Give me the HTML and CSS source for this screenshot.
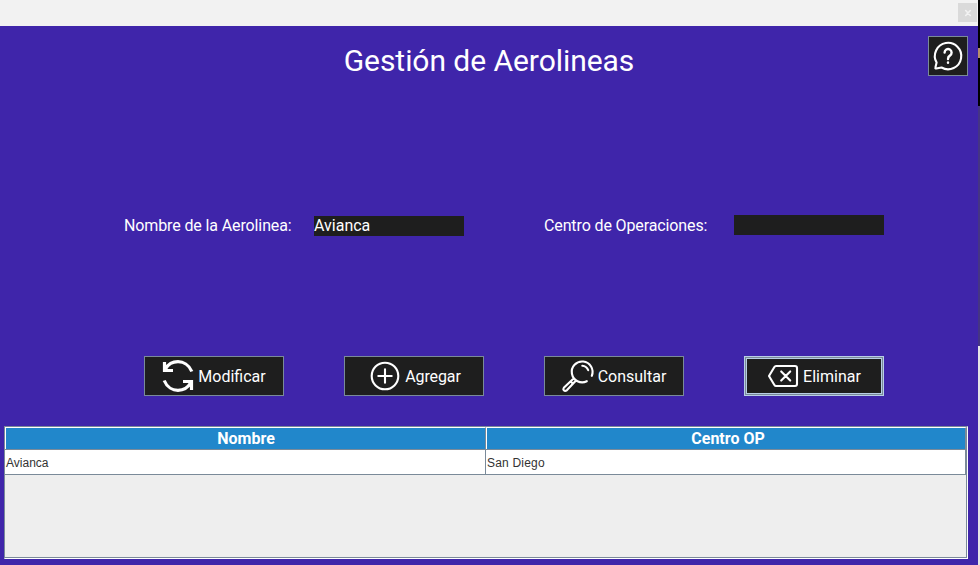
FILE: index.html
```html
<!DOCTYPE html>
<html lang="es">
<head>
<meta charset="utf-8">
<title>Gestión de Aerolineas</title>
<link rel="stylesheet" href="styles.css">
</head>
<body>
<div class="screen">
  <div class="window">
    <header class="titlebar"><button class="close" aria-label="Cerrar"><svg width="6" height="6" viewBox="0 0 6 6"><path d="M.7 .5l4.6 5M5.3 .5l-4.6 5"/></svg></button></header>
    <main class="panel">
      <div class="heading">
        <h1>Gestión de Aerolineas</h1>
        <button class="help" aria-label="Ayuda">
          <svg width="32" height="32" viewBox="0 0 32 32"><path d="M4.6 22.6A13.2 13.2 0 1 1 9.5 27.5L4.3 28.5Q3 28.6 3.4 27.5z"/><path class="question" d="M12.6 12.6a3.5 3.5 0 1 1 5.3 3Q16 16.7 16 19"/><path class="question" d="M16 22.4v.3"/></svg>
        </button>
      </div>
      <div class="fields">
        <label for="nombre">Nombre de la Aerolinea:</label>
        <input id="nombre" class="name-input" value="Avianca">
        <label for="centro">Centro de Operaciones:</label>
        <input id="centro">
      </div>
      <div class="actions">
        <button class="action"><svg width="32" height="32" viewBox="0 0 32 32"><path class="thick" d="M29.8 11.5C27 4.5 21 1.7 16 1.7 10 1.7 6 4.5 3.5 9M2.5 2V10.5h8.5M2.2 20.5C5 27.5 11 30.3 16 30.3c6 0 10-2.8 12.5-7.3M29.5 30v-8.5H21"/></svg><span>Modificar</span></button>
        <button class="action agregar"><svg width="32" height="32" viewBox="0 0 32 32"><circle cx="16" cy="16" r="13.3"/><path d="M16 9.3v13.4M9.3 16h13.4"/></svg><span>Agregar</span></button>
        <button class="action"><svg width="32" height="32" viewBox="0 0 32 32"><path d="M24.8 21.2A10.4 10.4 0 1 1 29.8 15.8M20.3 5.8q4.2.3 5.9 4.4M11.6 18.4L1.8 27.8q-1 1.3 0 2.5 1.3 1.2 3 0l9.2-9.8M8.7 21.5l2.3 2.3"/></svg><span>Consultar</span></button>
        <button class="action selected"><svg width="32" height="32" viewBox="0 0 32 32"><path d="M9 6h19a2 2 0 0 1 2 2v16a2 2 0 0 1-2 2H9q-1 0-1.6-1L2 16l5.4-9Q8 6 9 6zM14.2 11.4l9 9.2M23.2 11.4l-9 9.2"/></svg><span>Eliminar</span></button>
      </div>
      <div class="table-frame">
        <table>
          <thead><tr><th>Nombre</th><th>Centro OP</th></tr></thead>
          <tbody><tr><td>Avianca</td><td>San Diego</td></tr></tbody>
        </table>
      </div>
    </main>
  </div>
  <div class="desktop-edge"></div>
</div>
</body>
</html>
```
FILE: styles.css
```css
* { box-sizing: border-box; }
body { margin: 0; overflow: hidden; font-family: Roboto, sans-serif; font-size: 16px; color: #fff; }
button { margin: 0; padding: 0; font: inherit; color: inherit; border-radius: 0; }
.screen { display: flex; width: 980px; height: 565px; }
.window { width: 978px; background: #3f25aa; }
.titlebar { display: flex; justify-content: flex-end; height: 26px; padding: 3px 1px 0 0; background: #f2f2f2; }
.close { display: flex; align-items: center; justify-content: center; width: 19px; height: 19px; border: 0; background: #dadada; }
.close svg { stroke: #f2f2f2; stroke-width: 1.6; }
.panel { display: flex; flex-direction: column; height: 539px; padding: 10px 10px 6px 4px; }
.heading { display: grid; grid-template-columns: 924px 40px; height: 40px; }
h1 { margin: 0; padding-left: 46px; font-size: 30px; font-weight: 400; line-height: 50px; letter-spacing: -.05px; text-align: center; white-space: nowrap; }
.help { display: flex; align-items: center; justify-content: center; width: 40px; height: 40px; border: 1px solid #7a8a99; background: #1e1e1e; }
svg { flex: none; overflow: visible; fill: none; stroke: #fff; stroke-width: 2.1; stroke-linecap: round; stroke-linejoin: round; }
.thick { stroke-width: 3.2; stroke-linecap: butt; stroke-linejoin: miter; }
.question { stroke-width: 2.4; }
.fields { display: grid; grid-template-columns: 190px 150px 80px 190px 150px; margin: 139px 0 0 120px; height: 21px; line-height: 21px; }
.fields label { letter-spacing: -.12px; }
.fields label:nth-of-type(2) { grid-column: 4; }
.fields input { width: 150px; height: 20px; padding: 0; border: 0; border-radius: 0; background: #1e1e1e; color: #fff; font: 16px/20px Roboto, sans-serif; outline: 0; }
.fields .name-input { margin-top: 1px; }
.actions { display: flex; gap: 60px; margin: 120px 0 0 140px; }
.action { display: flex; align-items: center; justify-content: center; gap: 4px; width: 140px; height: 40px; border: 1px solid #7a8a99; background: #1e1e1e; }
.agregar { padding-left: 2px; letter-spacing: -.1px; }
.selected { border: 1px solid #b8cfe5; box-shadow: inset 0 0 0 1px #7a8a99, inset 0 0 0 2px #b8cfe5; }
.table-frame { width: 964px; height: 133px; margin-top: 30px; border: 1px solid; border-color: #7a8a99 #fff #fff #7a8a99; background: #eee; box-shadow: inset -1px -1px #7a8a99; }
table { width: 962px; table-layout: fixed; border-collapse: separate; border-spacing: 0; }
th { height: 23px; padding: 0 0 0 2px; border: solid; border-width: 1px 1px 1px 0; border-color: #fff #7a8a99 #7a8a99; background: #2187cb; box-shadow: inset 1px 0 #fff; font-size: 16px; font-weight: 700; line-height: 21px; }
td { height: 25px; padding: 1px 0 0 1px; border-right: 1px solid #7a8a99; border-bottom: 1px solid #7a8a99; background: #fff; color: #333; font: 12px/22px "Liberation Sans", sans-serif; }
th:last-child, td:last-child { border-right-width: 2px; }
th:last-child { padding-left: 5px; }
td:last-child { letter-spacing: .2px; }
.desktop-edge { width: 2px; background: linear-gradient(#000 48px, #b58d69 48px 58px, #000 58px 106px, #453584 106px 346px, #e6e6e6 346px); }
```
